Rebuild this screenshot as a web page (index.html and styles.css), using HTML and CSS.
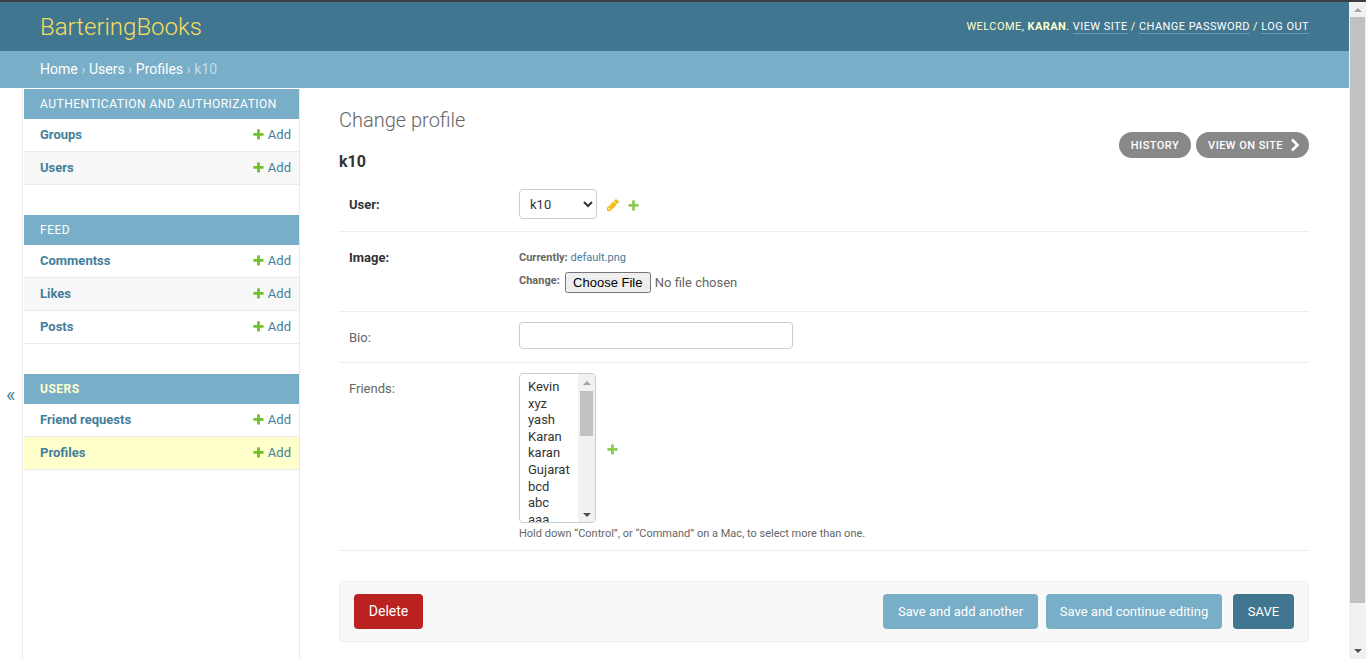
FILE: index.html
```html
<!DOCTYPE html>
<html lang="en">
<head>
<meta charset="utf-8">
<title>Change profile</title>
<link rel="stylesheet" href="styles.css">
</head>
<body>
<svg class="defs" width="0" height="0" aria-hidden="true">
  <symbol id="plus" viewBox="0 0 1792 1792"><path d="M1600 796v192q0 40-28 68t-68 28h-416v416q0 40-28 68t-68 28h-192q-40 0-68-28t-28-68v-416h-416q-40 0-68-28t-28-68v-192q0-40 28-68t68-28h416v-416q0-40 28-68t68-28h192q40 0 68 28t28 68v416h416q40 0 68 28t28 68z"/></symbol>
  <symbol id="pencil" viewBox="0 0 1792 1792"><path d="M491 1536l91-91-235-235-91 91v107h128v128h107zm523-928q0-22-22-22-10 0-17 7l-542 542q-7 7-7 17 0 22 22 22 10 0 17-7l542-542q7-7 7-17zm-54-192l416 416-832 832h-416v-416zm683 96q0 53-37 90l-166 166-416-416 166-165q36-38 90-38 53 0 91 38l235 234q37 39 37 91z"/></symbol>
</svg>
<div class="edge"></div>
<div class="window">
  <div class="page">
    <header class="header">
      <a class="brand">BarteringBooks</a>
      <div class="tools">Welcome, <strong>karan</strong>. <a>View site</a> / <a>Change password</a> / <a>Log out</a></div>
    </header>
    <nav class="crumbs"><a>Home</a> <span class="sep">›</span> <a>Users</a> <span class="sep">›</span> <a>Profiles</a> <span class="sep">›</span> <span class="cur">k10</span></nav>
    <div class="main">
      <div class="toggle">«</div>
      <aside class="sidebar">
        <section class="module">
          <div class="caption">Authentication and Authorization</div>
          <div class="row"><a class="model">Groups</a><a class="add"><svg class="ico plus"><use href="#plus"/></svg>Add</a></div>
          <div class="row alt"><a class="model">Users</a><a class="add"><svg class="ico plus"><use href="#plus"/></svg>Add</a></div>
        </section>
        <section class="module">
          <div class="caption">Feed</div>
          <div class="row"><a class="model">Commentss</a><a class="add"><svg class="ico plus"><use href="#plus"/></svg>Add</a></div>
          <div class="row alt"><a class="model">Likes</a><a class="add"><svg class="ico plus"><use href="#plus"/></svg>Add</a></div>
          <div class="row"><a class="model">Posts</a><a class="add"><svg class="ico plus"><use href="#plus"/></svg>Add</a></div>
        </section>
        <section class="module">
          <div class="caption current">Users</div>
          <div class="row"><a class="model">Friend requests</a><a class="add"><svg class="ico plus"><use href="#plus"/></svg>Add</a></div>
          <div class="row active"><a class="model">Profiles</a><a class="add"><svg class="ico plus"><use href="#plus"/></svg>Add</a></div>
        </section>
      </aside>
      <main class="content">
        <h1 class="title">Change profile</h1>
        <div class="objhead">
          <h2 class="objname">k10</h2>
          <div class="objtools">
            <a class="pill">History</a>
            <a class="pill">View on site<svg class="chev" viewBox="0 0 10 14"><path d="M2 1.5 7.5 7 2 12.5" fill="none" stroke="#fff" stroke-width="2.6"/></svg></a>
          </div>
        </div>
        <form class="form">
          <div class="frow r-user">
            <label class="lbl req">User:</label>
            <div class="field inline">
              <select class="sel"><option>k10</option></select>
              <svg class="ico pen lead"><use href="#pencil"/></svg>
              <svg class="ico plus soft"><use href="#plus"/></svg>
            </div>
          </div>
          <div class="frow r-image">
            <label class="lbl req">Image:</label>
            <div class="field">
              <p class="upload"><span class="tag">Currently:</span> <a class="filelink">default.png</a></p>
              <p class="upload change"><span class="tag">Change:</span> <input class="file" type="file"></p>
            </div>
          </div>
          <div class="frow r-bio">
            <label class="lbl">Bio:</label>
            <div class="field"><input class="text" type="text"></div>
          </div>
          <div class="frow r-friends">
            <label class="lbl">Friends:</label>
            <div class="field">
              <div class="inline">
                <div class="multi">
                  <div class="opts"><div>Kevin</div><div>xyz</div><div>yash</div><div>Karan</div><div>karan</div><div>Gujarat</div><div>bcd</div><div>abc</div><div>aaa</div></div>
                  <div class="mscroll">
                    <span class="arr up"></span>
                    <span class="mthumb"></span>
                    <span class="arr down"></span>
                  </div>
                </div>
                <svg class="ico plus soft lead2"><use href="#plus"/></svg>
              </div>
              <p class="help">Hold down “Control”, or “Command” on a Mac, to select more than one.</p>
            </div>
          </div>
          <div class="submit">
            <a class="btn delete">Delete</a>
            <span class="spacer"></span>
            <a class="btn light w1">Save and add another</a>
            <a class="btn light w2">Save and continue editing</a>
            <a class="btn dark">SAVE</a>
          </div>
        </form>
      </main>
    </div>
  </div>
  <div class="pagebar">
    <span class="arr up"></span>
    <span class="thumb"></span>
    <span class="arr down"></span>
  </div>
</div>
</body>
</html>
```
FILE: styles.css
```css
* { box-sizing: border-box; }
html, body { margin: 0; height: 100%; overflow: hidden; }
body { font-family: Roboto, "Liberation Sans", sans-serif; font-size: 14px; color: #333; background: #fff; display: flex; flex-direction: column; }
.defs { position: absolute; }
p { margin: 0; }
.edge { height: 2px; background: #3c3f41; flex: none; }
.window { flex: 1; display: flex; min-height: 0; }
.page { flex: 1; min-width: 0; display: flex; flex-direction: column; }

.header { height: 49px; background: #417690; display: flex; align-items: center; justify-content: space-between; padding: 0 40px; flex: none; }
.brand { font-size: 24px; font-weight: 300; color: #f5dd5d; }
.tools { font-size: 11px; letter-spacing: .44px; text-transform: uppercase; color: #ffc; }
.tools strong { font-weight: 700; }
.tools a { color: #fff; border-bottom: 1px solid rgba(255,255,255,.25); }

.crumbs { height: 37px; background: #79aec8; color: #fff; padding: 0 40px 2px; font-size: 14px; display: flex; align-items: center; gap: 3.5px; flex: none; }
.crumbs a { color: #fff; }
.crumbs .sep, .crumbs .cur { color: #c4dce8; }

.main { flex: 1; display: flex; min-height: 0; }
.toggle { width: 23px; flex: none; border-right: 1px solid #eaeaea; color: #447e9b; font-size: 20px; padding-top: 295px; padding-left: 6px; line-height: 25px; }
.sidebar { width: 277px; flex: none; border-right: 1px solid #eaeaea; padding: 1px 0 0 1px; display: flex; flex-direction: column; gap: 30px; }
.caption { height: 30px; background: #79aec8; color: #fff; font-size: 12px; letter-spacing: .5px; text-transform: uppercase; padding: 0 16px; display: flex; align-items: center; white-space: nowrap; }
.caption.current { color: #ffc; font-weight: 700; }
.row { height: 33px; padding: 0 8px 2px 16px; border-bottom: 1px solid #eaeaea; display: flex; align-items: center; justify-content: space-between; font-size: 13px; }
.row.alt { background: #f8f8f8; }
.row.active { background: #ffc; }
.model { color: #447e9b; font-weight: 700; }
.add { color: #447e9b; display: flex; align-items: center; }
.ico { display: block; flex: none; }
.plus { width: 13px; height: 13px; fill: #70bf2b; }
.add .plus { margin-right: 3px; }
.soft { opacity: .8; }
.pen { width: 14px; height: 14px; fill: #efb80b; }

.content { flex: 1; min-width: 0; padding: 20px 40px 0 39px; }
.title { margin: 0; font-size: 20px; font-weight: 300; color: #666; line-height: 24px; }
.objhead { display: flex; justify-content: space-between; align-items: flex-start; height: 47px; }
.objname { margin: 20px 0 0; font-size: 16px; font-weight: 700; line-height: 20px; color: #333; }
.objtools { display: flex; gap: 5px; }
.pill { height: 26px; border-radius: 13px; background: #888; color: #fff; font-size: 11px; font-weight: 500; letter-spacing: .45px; text-transform: uppercase; padding: 0 12px; display: flex; align-items: center; }
.chev { width: 10px; height: 14px; margin-left: 7px; margin-right: -3px; }

.frow { display: flex; align-items: flex-start; border-bottom: 1px solid #eee; padding: 0 10px; font-size: 13px; }
.lbl { width: 170px; flex: none; color: #666; }
.lbl.req { color: #333; font-weight: 700; }
.inline { display: flex; align-items: center; }
.r-user { height: 53px; padding-top: 10px; }
.r-user .lbl { padding-top: 8px; line-height: 16px; }
.sel { width: 78px; height: 30px; border: 1px solid #ccc; border-radius: 4px; background: #fff; font: 13px Roboto, sans-serif; color: #333; padding: 0 6px; }
.lead { margin-left: 9px; margin-top: 2px; }
.pen + .plus { margin-left: 7px; margin-top: 2px; }
.r-image { height: 80px; padding-top: 18px; }
.r-image .lbl { line-height: 16px; }
.upload { font-size: 11px; color: #666; line-height: 14px; }
.field > .upload:first-child { margin-top: 1px; }
.tag { font-weight: 700; }
.filelink { color: #447e9b; }
.change { display: flex; align-items: flex-start; gap: 5px; margin-top: 9px; line-height: 14px; }
.file { font: 13px Roboto, sans-serif; color: #666; margin-top: -2px; }
.file::file-selector-button { font: 13px "Liberation Sans", Arial, sans-serif; color: #000; width: 86px; padding: 1px 0; }
.r-bio { height: 51px; padding-top: 10px; }
.r-bio .lbl { padding-top: 8px; line-height: 16px; }
.text { width: 274px; height: 27px; border: 1px solid #ccc; border-radius: 4px; background: #fff; display: block; }
.r-friends { height: 188px; padding-top: 10px; }
.r-friends .lbl { padding-top: 8px; line-height: 16px; }
.multi { width: 77px; height: 150px; border: 1px solid #ccc; border-radius: 4px; display: flex; overflow: hidden; }
.opts { flex: 1; padding: 5px 0 0 8px; font-size: 13px; line-height: 16.6px; color: #333; overflow: hidden; }
.mscroll { width: 17px; flex: none; background: #f1f1f1; display: flex; flex-direction: column; align-items: center; }
.mthumb { display: block; width: 13px; height: 45px; background: #c1c1c1; }
.mscroll .up { margin-top: 7px; margin-bottom: 6px; }
.mscroll .down { margin-top: auto; margin-bottom: 5px; }
.arr { display: block; width: 0; height: 0; border-left: 4px solid transparent; border-right: 4px solid transparent; flex: none; }
.arr.up { border-bottom: 4px solid #a3a3a3; }
.arr.down { border-top: 4px solid #505050; }
.lead2 { margin-left: 10px; margin-top: 2px; }
.help { font-size: 11px; color: #666; line-height: 14px; margin-top: 4px; }

.submit { margin-top: 30px; height: 61px; border: 1px solid #eee; border-radius: 4px; background: #f8f8f8; padding: 12px 14px; display: flex; align-items: center; gap: 8px; }
.spacer { flex: 1; }
.btn { height: 35px; border-radius: 4px; color: #fff; font-size: 13px; display: flex; align-items: center; justify-content: center; }
.delete { width: 69px; background: #ba2121; font-size: 14px; padding-bottom: 1px; }
.light { background: #79aec8; }
.w1 { width: 155px; }
.w2 { width: 176px; }
.dark { width: 61px; background: #417690; margin-left: 3px; }

.pagebar { width: 17px; flex: none; background: #f1f1f1; display: flex; flex-direction: column; align-items: center; }
.pagebar .up { margin-top: 6px; margin-bottom: 5px; }
.thumb { display: block; width: 15px; height: 586px; background: #c1c1c1; }
.pagebar .down { margin-top: auto; margin-bottom: 6px; }
```
